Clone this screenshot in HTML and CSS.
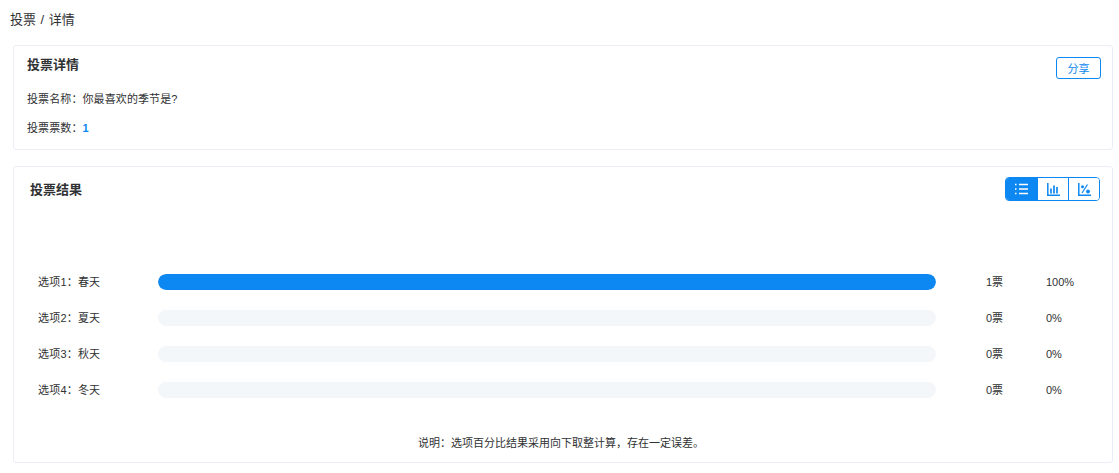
FILE: index.html
```html
<!DOCTYPE html>
<html lang="zh-CN">
<head>
    <meta charset="UTF-8">
    <meta name="viewport" content="width=device-width, initial-scale=1.0">
    <title>投票详情</title>
    <link rel="stylesheet" href="styles.css">
</head>
<body>
    <!-- 面包屑 -->
    <div class="breadcrumb">投票 / 详情</div>

    <!-- 投票详情 -->
    <div class="card detail-card">
        <div class="detail-head">
            <h2 class="card-title">投票详情</h2>
            <button class="share-btn">分享</button>
        </div>
        <p class="detail-line">投票名称：你最喜欢的季节是?</p>
        <p class="detail-line">投票票数：<span class="detail-num">1</span></p>
    </div>

    <!-- 投票结果 -->
    <div class="card result-card">
        <div class="result-head">
            <h2 class="card-title">投票结果</h2>
            <div class="view-switch">
                <button class="view-btn view-btn-active">
                    <svg width="13" height="12" viewBox="0 0 13 12" fill="none" stroke="currentColor" stroke-width="1.5">
                        <path d="M0 1.500h1.500M0 6h1.500M0 10.500h1.500M4 1.500h9M4 6h9M4 10.500h9"/>
                    </svg>
                </button>
                <button class="view-btn">
                    <svg width="13" height="13" viewBox="0 0 13 13" fill="none" stroke="currentColor" stroke-width="1.5">
                        <path d="M.8 0v12.200H13"/>
                        <path d="M4 5.500v5M7 2.500v8M10 4v6.500" stroke-width="1.700"/>
                    </svg>
                </button>
                <button class="view-btn">
                    <svg width="13" height="13" viewBox="0 0 13 13" fill="none" stroke="currentColor" stroke-width="1.5">
                        <path d="M.8 0v12.200H13"/>
                        <path d="M9.500 1.500L4 10" stroke-width="1.200"/>
                        <circle cx="4.500" cy="3.800" r="1.500" fill="currentColor" stroke="none"/>
                        <circle cx="10" cy="8.500" r="1.900" fill="currentColor" stroke="none"/>
                    </svg>
                </button>
            </div>
        </div>

        <div class="option-list">
            <div class="option-row">
                <span class="option-name">选项1：春天</span>
                <div class="option-bar"><div class="option-fill" style="width: 100%"></div></div>
                <span class="option-count">1票</span>
                <span class="option-pct">100%</span>
            </div>
            <div class="option-row">
                <span class="option-name">选项2：夏天</span>
                <div class="option-bar"></div>
                <span class="option-count">0票</span>
                <span class="option-pct">0%</span>
            </div>
            <div class="option-row">
                <span class="option-name">选项3：秋天</span>
                <div class="option-bar"></div>
                <span class="option-count">0票</span>
                <span class="option-pct">0%</span>
            </div>
            <div class="option-row">
                <span class="option-name">选项4：冬天</span>
                <div class="option-bar"></div>
                <span class="option-count">0票</span>
                <span class="option-pct">0%</span>
            </div>
        </div>

        <p class="result-note">说明：选项百分比结果采用向下取整计算，存在一定误差。</p>
    </div>
</body>
</html>
```

FILE: styles.css
```css
body {
    font-family: "Liberation Sans", "Noto Sans CJK SC", sans-serif;
    background-color: #ffffff;
    color: #303133;
    margin: 0;
    padding: 0 6px 0 13px;
    font-size: 11px;
}

.breadcrumb {
    font-size: 13px;
    line-height: 20px;
    word-spacing: 1px;
    padding-top: 10px;
    margin-left: -3px;
    margin-bottom: 15px;
}

.card {
    border: 1px solid #ebeef5;
    border-radius: 3px;
    background-color: #ffffff;
}

.detail-card {
    height: 103px;
    padding: 0 11px 0 13px;
    margin-bottom: 16px;
}

.detail-head {
    display: flex;
    justify-content: space-between;
    align-items: flex-start;
    height: 45px;
}

.card-title {
    font-size: 13px;
    line-height: 18px;
    font-weight: bold;
    margin: 0;
}

.detail-head .card-title {
    margin-top: 10px;
}

.share-btn {
    width: 45px;
    height: 22px;
    margin-top: 11px;
    padding: 0;
    border: 1px solid #0d88f2;
    border-radius: 3px;
    background-color: #ffffff;
    color: #0d88f2;
    font-family: inherit;
    font-size: 11px;
}

.detail-line {
    margin: 0 0 13px;
    line-height: 16px;
    letter-spacing: 0.1px;
}

.detail-num {
    color: #0d88f2;
    font-weight: bold;
}

.result-card {
    height: 295px;
    padding: 0 12px 0 16px;
}

.result-head {
    display: flex;
    justify-content: space-between;
    align-items: flex-start;
    height: 97px;
}

.result-head .card-title {
    margin-top: 14px;
}

.view-switch {
    display: flex;
    margin-top: 10px;
    border: 1px solid #0d88f2;
    border-radius: 4px;
    overflow: hidden;
}

.view-btn {
    display: flex;
    align-items: center;
    justify-content: center;
    width: 31px;
    height: 22px;
    padding: 0;
    border: none;
    border-left: 1px solid #0d88f2;
    background-color: #ffffff;
    color: #0d88f2;
}

.view-btn:first-child {
    border-left: none;
}

.view-btn-active {
    background-color: #0d88f2;
    color: #ffffff;
}

.option-row {
    display: flex;
    align-items: center;
    height: 36px;
    margin-left: 8px;
    line-height: 15px;
}

.option-name {
    width: 120px;
    letter-spacing: 0.2px;
}

.option-bar {
    width: 778px;
    height: 16px;
    border-radius: 8px;
    background-color: #f4f7fa;
    overflow: hidden;
}

.option-fill {
    height: 100%;
    border-radius: 8px;
    background-color: #0d88f2;
}

.option-count {
    width: 60px;
    margin-left: 50px;
}

.result-note {
    margin: 27px 0 0;
    padding-right: 8px;
    line-height: 16px;
    text-align: center;
    word-spacing: 0;
}
```
